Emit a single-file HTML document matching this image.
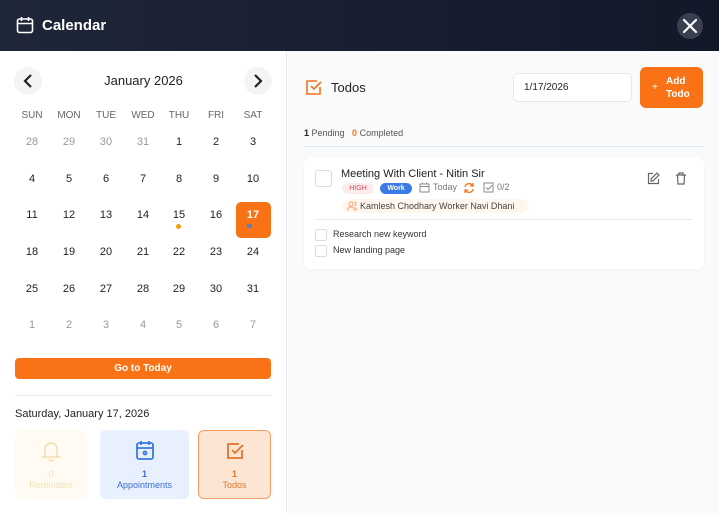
<!DOCTYPE html><html><head><style>
*{margin:0;padding:0;box-sizing:border-box}
body{width:719px;height:513px;overflow:hidden;font-family:"Liberation Sans",sans-serif;background:#fff;position:relative}
.hdr{position:absolute;left:0;top:0;width:719px;height:51px;background:linear-gradient(90deg,#1e2639,#131829)}
.abs{position:absolute}
.left{position:absolute;left:0;top:51px;width:287px;height:462px;background:#fff;border-right:1px solid #e6e9ee}
.right{position:absolute;left:288px;top:51px;width:431px;height:462px;background:#f8fafc}
.c{position:absolute;width:36px;text-align:center;font-size:11px;color:#222}
.g{color:#999}
.wd{font-size:10px;color:#666}
</style></head><body>
<div class="hdr"></div>
<svg class="abs" style="left:16px;top:16px" width="18" height="18" viewBox="0 0 18 18" fill="none" stroke="#fff" stroke-width="1.6"><rect x="1.5" y="3" width="15" height="13.5" rx="2"/><path d="M1.5 7.5h15M5.5 1v4M12.5 1v4"/></svg>
<div class="abs" style="left:42px;top:17px;color:#fff;font-size:15px;font-weight:bold">Calendar</div>
<div class="abs" style="left:677px;top:13px;width:26px;height:26px;border-radius:13px;background:#3a3f50"></div>
<svg class="abs" style="left:683px;top:19px" width="14" height="14" viewBox="0 0 14 14" stroke="#fff" stroke-width="2.2" stroke-linecap="round"><path d="M1 1l12 12M13 1L1 13"/></svg>
<div class="left"></div>
<div class="abs" style="left:14px;top:67px;width:28px;height:28px;border-radius:14px;background:#f3f4f6"></div>
<div class="abs" style="left:244px;top:67px;width:28px;height:28px;border-radius:14px;background:#f3f4f6"></div>
<svg class="abs" style="left:22px;top:73px" width="12" height="16" viewBox="0 0 12 16" fill="none" stroke="#222" stroke-width="2.2"><path d="M9 2L3 8l6 6"/></svg>
<svg class="abs" style="left:252px;top:73px" width="12" height="16" viewBox="0 0 12 16" fill="none" stroke="#222" stroke-width="2.2"><path d="M3 2l6 6-6 6"/></svg>
<div class="abs" style="left:0;top:73px;width:287px;text-align:center;font-size:13px;color:#222">January 2026</div>
<div class="abs" style="left:236px;top:202px;width:35px;height:36px;background:#f97316;border-radius:5px"></div>
<div class="abs" style="left:176px;top:224px;width:5px;height:5px;border-radius:3px;background:#f59e0b"></div>
<div class="abs" style="left:247px;top:224px;width:5px;height:4px;background:#5b7fc0"></div>
<div id="cal"></div>
<script>
var xs=[32,69,106,143,179,216,253],ys=[143,180,216,253,290,326],h='';
['SUN','MON','TUE','WED','THU','FRI','SAT'].forEach(function(d,i){h+='<div class="c wd" style="left:'+(xs[i]-18)+'px;top:110px">'+d+'</div>'});
var days=[28,29,30,31];for(var i=1;i<=31;i++)days.push(i);for(var i=1;i<=7;i++)days.push(i);
days.forEach(function(d,k){var r=Math.floor(k/7),c=k%7;var g=(r==0&&k<4)||(r==5&&d<10);var s=(d==17&&r==2);
h+='<div class="c'+(g?' g':'')+'" style="left:'+(xs[c]-18)+'px;top:'+(ys[r]-7)+'px;'+(s?'color:#fff;font-weight:bold':'')+'">'+d+'</div>'});
document.getElementById('cal').innerHTML=h;
</script>
<div class="abs" style="left:15px;top:358px;width:256px;height:21px;background:#f97316;border-radius:4px;color:#fff;font-size:10px;font-weight:bold;text-align:center;line-height:21px">Go to Today</div>
<div class="abs" style="left:15px;top:395px;width:256px;height:1px;background:#e5e7eb"></div>
<div class="abs" style="left:15px;top:408px;font-size:11px;color:#222">Saturday, January 17, 2026</div>
<div class="abs" style="left:15px;top:430px;width:72px;height:69px;background:#fffbf3;border-radius:6px;text-align:center;color:#f4dfb8;font-size:9px;padding-top:10px;line-height:11px">
<svg width="20" height="22" viewBox="0 0 20 22" fill="none" stroke="#f4dcae" stroke-width="1.5"><path d="M4 15V9a6 6 0 0112 0v6l2 2H2z M8 19a2 2 0 004 0"/></svg><div style="margin-top:4px">0</div><div>Reminders</div></div>
<div class="abs" style="left:100px;top:430px;width:89px;height:69px;background:#e8f0fd;border-radius:6px;text-align:center;color:#3b6fd1;font-size:9px;padding-top:10px;line-height:11px">
<svg width="20" height="22" viewBox="0 0 20 22" fill="none" stroke="#3b78e0" stroke-width="1.8"><rect x="2" y="3" width="16" height="16" rx="2"/><path d="M2 8h16M6 1v4M14 1v4"/><circle cx="10" cy="13" r="1.5"/></svg><div style="font-weight:bold;margin-top:4px">1</div><div>Appointments</div></div>
<div class="abs" style="left:198px;top:430px;width:73px;height:69px;background:#fde5d4;border:1px solid #f59e60;border-radius:6px;text-align:center;color:#e2742c;font-size:9px;padding-top:9px;line-height:11px">
<svg width="20" height="22" viewBox="0 0 20 22" fill="none" stroke="#e2742c" stroke-width="1.8"><path d="M17 10v8H3V4h11"/><path d="M7 10l3 3 8-8"/></svg><div style="font-weight:bold;margin-top:4px">1</div><div>Todos</div></div>
<div class="right"></div>
<svg class="abs" style="left:305px;top:78px" width="18" height="18" viewBox="0 0 18 18" fill="none" stroke="#f97316" stroke-width="1.6"><path d="M15 9v7H2V3h10"/><path d="M6 8l3 3 7-7"/></svg>
<div class="abs" style="left:331px;top:80px;font-size:13px;color:#222">Todos</div>
<div class="abs" style="left:513px;top:73px;width:119px;height:29px;background:#fff;border:1px solid #e5e7eb;border-radius:5px;font-size:10px;color:#222;padding:8px 0 0 10px">1/17/2026</div>
<div class="abs" style="left:640px;top:67px;width:63px;height:41px;background:#f97316;border-radius:6px;color:#fff;font-size:10px;font-weight:bold;line-height:13px;padding:8px 0 0 26px"><span style="position:absolute;left:12px;top:14px;font-weight:normal">+</span>Add<br>Todo</div>
<div class="abs" style="left:304px;top:128px;font-size:9px;color:#555"><b style="color:#222">1</b> Pending &nbsp; <b style="color:#f97316">0</b> Completed</div>
<div class="abs" style="left:304px;top:146px;width:400px;height:1px;background:#e2e5ea"></div>
<div class="abs" style="left:304px;top:157px;width:400px;height:112px;background:#fff;border-radius:7px;box-shadow:0 1px 3px rgba(0,0,0,.04)"></div>
<div class="abs" style="left:315px;top:170px;width:17px;height:17px;border:1px solid #ddd;border-radius:3px"></div>
<div class="abs" style="left:341px;top:168px;font-size:11px;color:#222">Meeting With Client - Nitin Sir</div>
<div class="abs" style="left:342px;top:183px;width:32px;height:11px;background:#fdeced;border-radius:6px;color:#e0455a;font-size:7px;text-align:center;line-height:11px">HIGH</div>
<div class="abs" style="left:380px;top:183px;width:32px;height:11px;background:#3b7be8;border-radius:6px;color:#fff;font-size:7px;font-weight:bold;text-align:center;line-height:11px">Work</div>
<svg class="abs" style="left:419px;top:182px" width="11" height="11" viewBox="0 0 11 11" fill="none" stroke="#888"><rect x="1" y="2" width="9" height="8"/><path d="M1 4.5h9M3.5 0.5v2M7.5 0.5v2"/></svg>
<div class="abs" style="left:433px;top:182px;font-size:9px;color:#777">Today</div>
<svg class="abs" style="left:463px;top:182px" width="12" height="12" viewBox="0 0 12 12" fill="none" stroke="#f97316" stroke-width="1.3"><path d="M2 5a4 4 0 017-2l1 1M10 7a4 4 0 01-7 2L2 8M10 1v3H7M2 11V8h3"/></svg>
<svg class="abs" style="left:483px;top:182px" width="11" height="11" viewBox="0 0 11 11" fill="none" stroke="#888"><rect x="1" y="1" width="9" height="9"/><path d="M3 5.5l2 2 4-4"/></svg>
<div class="abs" style="left:497px;top:182px;font-size:9px;color:#777">0/2</div>
<div class="abs" style="left:342px;top:199px;width:186px;height:14px;background:#fff6ee;border-radius:7px;font-size:9px;color:#444;line-height:14px;padding-left:18px">Kamlesh Chodhary Worker Navi Dhani</div>
<svg class="abs" style="left:347px;top:201px" width="10" height="10" viewBox="0 0 10 10" fill="none" stroke="#f0a070"><circle cx="4" cy="3" r="2"/><path d="M0.5 9.5a3.5 3.5 0 017 0M7 1a2 2 0 010 4M8 6.5a3 3 0 011.5 3"/></svg>
<svg class="abs" style="left:647px;top:172px" width="13" height="13" viewBox="0 0 13 13" fill="none" stroke="#666" stroke-width="1.2"><path d="M6 1.5H1.5v10h10V7M10 1l2 2-6 6H4V7z"/></svg>
<svg class="abs" style="left:675px;top:172px" width="12" height="13" viewBox="0 0 12 13" fill="none" stroke="#666" stroke-width="1.2"><path d="M1 3h10M4 3V1h4v2M2.5 3l.5 9h6l.5-9"/></svg>
<div class="abs" style="left:315px;top:219px;width:377px;height:1px;background:#e5e7eb"></div>
<div class="abs" style="left:315px;top:229px;width:12px;height:12px;border:1px solid #ddd;border-radius:2px"></div>
<div class="abs" style="left:333px;top:229px;font-size:9px;color:#333">Research new keyword</div>
<div class="abs" style="left:315px;top:245px;width:12px;height:12px;border:1px solid #ddd;border-radius:2px"></div>
<div class="abs" style="left:333px;top:245px;font-size:9px;color:#333">New landing page</div>
</body></html>
